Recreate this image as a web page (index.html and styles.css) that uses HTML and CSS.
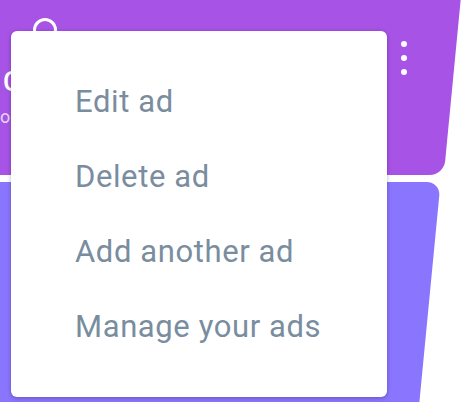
FILE: index.html
```html
<!DOCTYPE html>
<html lang="en">
<head>
    <meta charset="UTF-8">
    <meta name="viewport" content="width=device-width, initial-scale=1.0">
    <title>My Ads</title>
    <link rel="stylesheet" href="styles.css">
</head>
<body>

<div class="feed">
    <div class="ad-card ad-card-purple">
        <div class="ad-head">
            <svg class="ad-icon" width="26" height="26" viewBox="0 0 26 26">
                <circle cx="13" cy="13" r="10.5" fill="none" stroke="white" stroke-width="3"/>
            </svg>
            <button class="kebab" aria-label="More">
                <svg width="8" height="36" viewBox="0 0 8 36">
                    <circle cx="4" cy="4" r="3" fill="white"/>
                    <circle cx="4" cy="18" r="3" fill="white"/>
                    <circle cx="4" cy="32" r="3" fill="white"/>
                </svg>
            </button>
        </div>
        <h3 class="ad-title">Cozy reading chair</h3>
        <p class="ad-sub">olive velvet, lightly used</p>
    </div>
    <div class="ad-card ad-card-violet"></div>
</div>

<div class="menu">
    <ul>
        <li><a href="#">Edit ad</a></li>
        <li><a href="#">Delete ad</a></li>
        <li><a href="#">Add another ad</a></li>
        <li><a href="#">Manage your ads</a></li>
    </ul>
</div>

</body>
</html>
```

FILE: styles.css
```css
body {
    font-family: Roboto, "Liberation Sans", sans-serif;
    margin: 0;
    padding: 0;
    background-color: white;
    overflow: hidden;
}

.feed {
    display: flex;
    flex-direction: column;
    height: 402px;
    overflow: hidden;
}

.ad-card {
    position: relative;
    isolation: isolate;
    box-sizing: border-box;
    flex-shrink: 0;
    margin-left: -40px;
    color: white;
}

/* slanted card shape, content stays upright */
.ad-card::before {
    content: "";
    position: absolute;
    inset: 0;
    z-index: -1;
    transform: skewX(-5.5deg);
}

.ad-card-purple {
    width: 493px;
    height: 191px;
    margin-top: -16px;
    padding: 33px 46px 0 43px;
}

.ad-card-purple::before {
    background-color: #a653e6;
    border-radius: 0 0 14px 0;
}

.ad-card-violet {
    width: 470px;
    height: 220px;
    margin-top: 7px;
}

.ad-card-violet::before {
    background-color: #8a75fe;
    border-radius: 0 14px 0 0;
}

.ad-head {
    display: flex;
    justify-content: space-between;
    align-items: flex-start;
    margin-left: 29px;
    height: 42px;
}

.kebab {
    background: none;
    border: none;
    padding: 0;
    margin-top: 23px;
    margin-right: -1px;
    cursor: pointer;
}

.kebab svg {
    display: block;
}

.ad-title {
    margin: 7px 0 0 0;
    font-size: 27px;
    line-height: 32px;
    font-weight: 500;
}

.ad-sub {
    margin: 7px 0 0 -3px;
    font-size: 18px;
    line-height: 24px;
    opacity: 0.75;
}

.menu {
    position: absolute;
    top: 31px;
    left: 11px;
    width: 376px;
    height: 366px;
    box-sizing: border-box;
    background-color: white;
    border-radius: 6px;
    box-shadow: 0 1px 4px rgba(0, 0, 0, 0.28);
}

.menu ul {
    list-style: none;
    margin: 0;
    padding: 33px 0;
}

.menu li a {
    display: block;
    padding-left: 64px;
    line-height: 75px;
    font-size: 31px;
    letter-spacing: 0.6px;
    color: #7a8d9f;
    text-decoration: none;
}
```
